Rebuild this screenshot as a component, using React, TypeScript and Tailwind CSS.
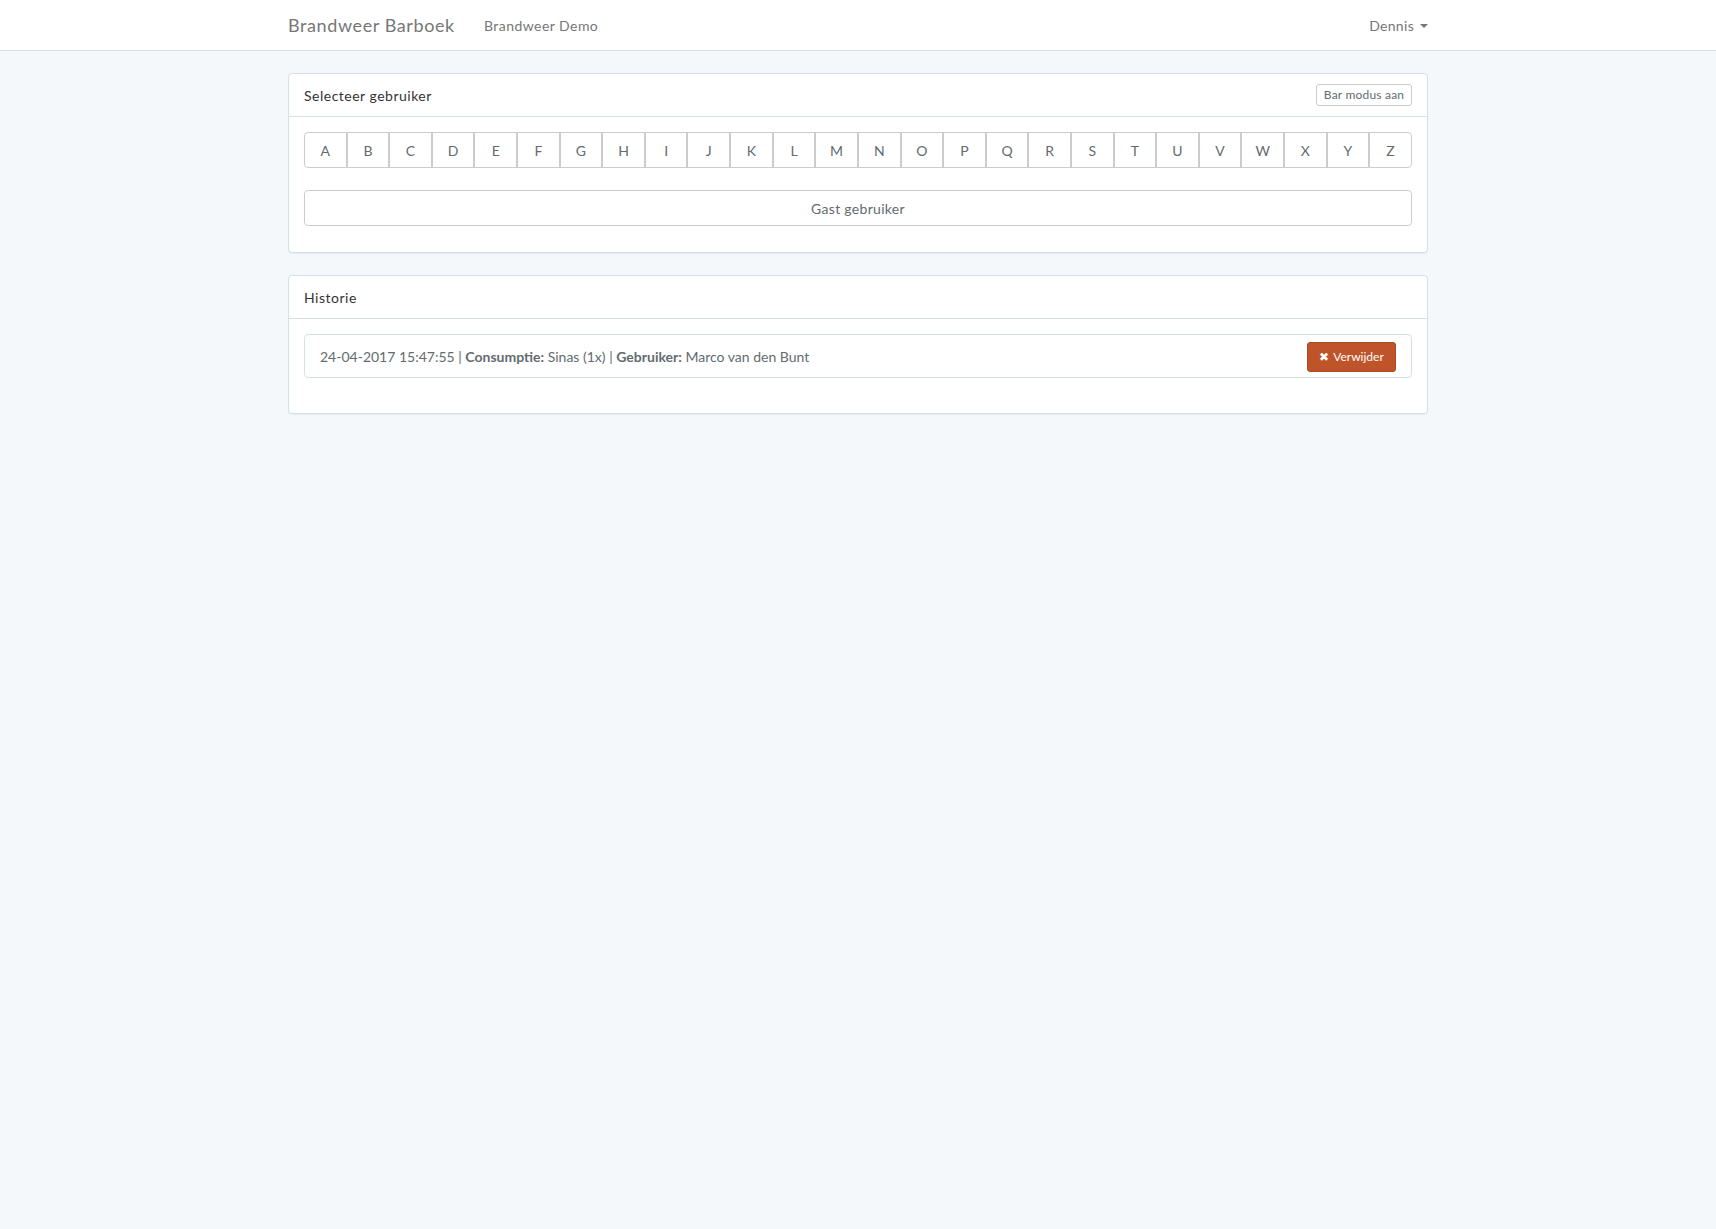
import React from 'react';

const letters = 'ABCDEFGHIJKLMNOPQRSTUVWXYZ'.split('');

function Panel({ title, action, children }: { title: string; action?: React.ReactNode; children: React.ReactNode }) {
  return (
    <div className="bg-white border border-[#d3e0e9] rounded-[4px] shadow-[0_1px_1px_rgba(0,0,0,0.05)] mb-[22px]">
      <div className="h-[43px] px-[15px] flex items-center justify-between border-b border-[#d3e0e9] text-[#333] text-[14px] tracking-[0.5px]">
        <span>{title}</span>
        {action}
      </div>
      {children}
    </div>
  );
}

export default function App() {
  return (
    <div className="min-h-screen bg-[#f5f8fa] text-[#636b6f] text-[14px] font-['Lato','Liberation_Sans',sans-serif]">
      <nav className="h-[51px] bg-white border-b border-[#d3e0e9]">
        <div className="w-[1140px] mx-auto h-full flex items-center justify-between">
          <div className="flex items-center">
            <span className="w-[196px] text-[18px] text-[#777] tracking-[0.6px]">Brandweer Barboek</span>
            <span className="text-[14px] text-[#777] tracking-[0.45px]">Brandweer Demo</span>
          </div>
          <div className="flex items-center text-[#777] tracking-[0.3px]">
            <span>Dennis</span>
            <span className="ml-[6px] mt-[1px] w-0 h-0 border-t-[4px] border-t-[#777] border-x-[4px] border-x-transparent" />
          </div>
        </div>
      </nav>

      <main className="w-[1140px] mx-auto mt-[22px]">
        <Panel
          title="Selecteer gebruiker"
          action={
            <button className="w-[96px] h-[22px] text-[12px] text-[#636b6f] bg-white border border-[#ccc] rounded-[3px] tracking-[0.2px]">
              Bar modus aan
            </button>
          }
        >
          <div className="px-[15px] pt-[15px] pb-[26px]">
            <div className="flex h-[36px]">
              {letters.map((l, i) => (
                <button
                  key={l}
                  className={
                    'flex-1 bg-white border border-[#ccc] text-[#636b6f] ' +
                    (i === 0 ? 'rounded-l-[4px]' : i === letters.length - 1 ? 'rounded-r-[4px]' : '')
                  }
                >
                  {l}
                </button>
              ))}
            </div>
            <button className="mt-[22px] w-full h-[36px] bg-white border border-[#ccc] rounded-[4px] text-[#636b6f] tracking-[0.3px]">
              Gast gebruiker
            </button>
          </div>
        </Panel>

        <Panel title="Historie">
          <div className="px-[15px] pt-[15px] pb-[35px]">
            <div className="h-[44px] border border-[#d3e0e9] rounded-[4px] pl-[15px] pr-[15px] flex items-center justify-between">
              <span>
                24-04-2017 15:47:55 | <b>Consumptie:</b> Sinas (1x) | <b>Gebruiker:</b> Marco van den Bunt
              </span>
              <button className="mt-[2px] w-[89px] h-[30px] text-[12px] text-white bg-[#bf5329] border border-[#aa4a24] rounded-[3px] flex items-center justify-center gap-[4px]">
                <span className="text-[12px] leading-none">✖</span>
                Verwijder
              </button>
            </div>
          </div>
        </Panel>
      </main>
    </div>
  );
}
